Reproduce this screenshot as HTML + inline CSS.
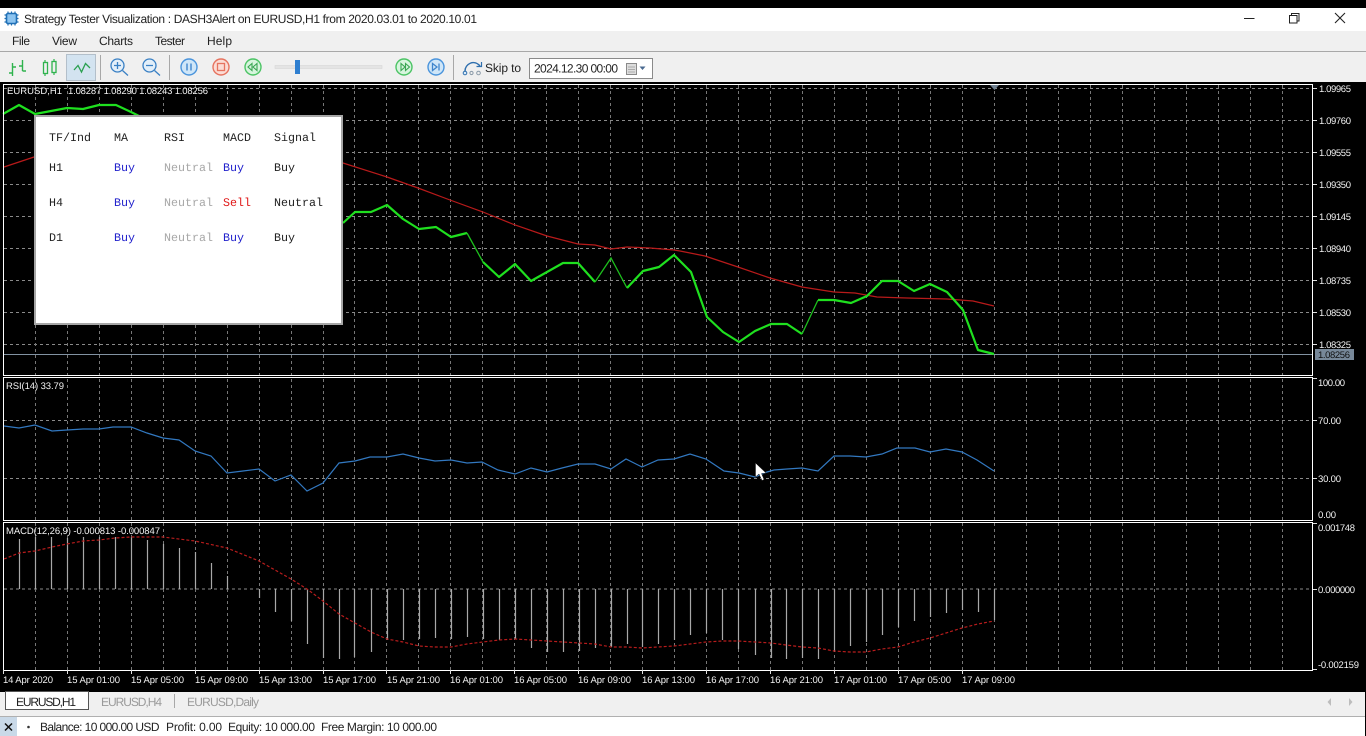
<!DOCTYPE html>
<html><head><meta charset="utf-8"><title>Strategy Tester Visualization</title>
<style>
html,body{margin:0;padding:0;background:#000;width:1366px;height:736px;overflow:hidden}
svg{display:block;filter:blur(.35px)}
text{font-family:"Liberation Sans",sans-serif;text-rendering:geometricPrecision}
.c text{font-size:9.5px;fill:#f2f2f2}
.u text{font-size:12px;fill:#222}
.m text{font-family:"Liberation Mono",monospace;font-size:11.67px;fill:#222;stroke:currentColor;stroke-width:0}
</style></head><body>
<svg xmlns="http://www.w3.org/2000/svg" width="1366" height="736" viewBox="0 0 1366 736">
<rect width="1366" height="736" fill="#000"/>
<!-- window chrome -->
<rect x="0" y="8" width="1366" height="23" fill="#fff"/>
<rect x="0" y="31" width="1366" height="51" fill="#f0f0f0"/>
<rect x="0" y="51" width="1366" height="1" fill="#a8a8a8"/>
<!-- title icon -->
<rect x="6.5" y="13.5" width="10" height="10" rx="1.5" fill="#8cc4f0" stroke="#1f6fb5" stroke-width="1.6"/>
<path d="M8 11.5V13M11.5 11.5V13M15 11.5V13M8 24V25.5M11.5 24V25.5M15 24V25.5M4.5 15H6M4.5 18.5H6M4.5 22H6M17 15H18.5M17 18.5H18.5M17 22H18.5" stroke="#1f6fb5" stroke-width="1.2"/>
<g class="u">
<text x="24" y="23" textLength="453">Strategy Tester Visualization : DASH3Alert on EURUSD,H1 from 2020.03.01 to 2020.10.01</text>
<text x="12" y="45" textLength="18">File</text>
<text x="52" y="45" textLength="25">View</text>
<text x="99" y="45" textLength="34">Charts</text>
<text x="155" y="45" textLength="30">Tester</text>
<text x="207" y="45" textLength="25">Help</text>
</g>
<!-- window controls -->
<path d="M1244 18.5H1254.5" stroke="#222" stroke-width="1"/>
<path d="M1289.5 15.5h7.5v7.5h-7.5zM1291.5 15.5v-2h7.5v7.5h-2" fill="none" stroke="#222" stroke-width="1"/>
<path d="M1335 13l10 10M1345 13l-10 10" stroke="#222" stroke-width="1.1"/>
<!-- toolbar -->
<path d="M12.5 63V76M9 73H12.5M22.5 60V71M22.5 66H19M12.5 67H16M22.500 71H26" stroke="#2fb34d" stroke-width="1.4" fill="none"/>
<path d="M45 60V76M54 59V75" stroke="#2fb34d" stroke-width="1.2"/>
<rect x="43.5" y="62.5" width="4" height="11" fill="#f0f0f0" stroke="#2fb34d" stroke-width="1.3"/>
<rect x="52" y="61.5" width="4" height="11" fill="#f0f0f0" stroke="#2fb34d" stroke-width="1.3"/>
<rect x="66.5" y="54.5" width="29" height="26" fill="#d3e3f0" stroke="#b3bfca"/>
<path d="M74 70L78 65.5L81.5 72L85.5 63.5L90 68" fill="none" stroke="#2aa050" stroke-width="1.3"/>
<rect x="100" y="55" width="1" height="25" fill="#a8a8a8"/>
<circle cx="117.5" cy="65.5" r="6.5" fill="#e3eff9" stroke="#3a80c4" stroke-width="1.3"/>
<path d="M122.5 70.5L128 75.5M114 65.5H121M117.5 62V69" stroke="#3a80c4" stroke-width="1.3"/>
<circle cx="149.5" cy="65.5" r="6.5" fill="#e3eff9" stroke="#3a80c4" stroke-width="1.3"/>
<path d="M154.5 70.5L160 75.5M146 65.5H153" stroke="#3a80c4" stroke-width="1.3"/>
<rect x="169" y="55" width="1" height="25" fill="#a8a8a8"/>
<circle cx="189" cy="67" r="8" fill="#cfe6f8" stroke="#4a94dc" stroke-width="1.4"/>
<path d="M187 63.5V70.5M191 63.5V70.5" stroke="#3f85cc" stroke-width="1.4"/>
<circle cx="221" cy="67" r="8" fill="#fbdcd5" stroke="#e6735f" stroke-width="1.4"/>
<rect x="217.5" y="63.5" width="7" height="7" fill="none" stroke="#e6735f" stroke-width="1.3"/>
<circle cx="253" cy="67" r="8" fill="#d7f5de" stroke="#4cc465" stroke-width="1.4"/>
<path d="M252 63.5L248 67L252 70.5ZM257 63.5L253 67L257 70.5Z" fill="none" stroke="#3aa553" stroke-width="1.1"/>
<rect x="275" y="65.5" width="107" height="3" fill="#e4e4e4" stroke="#d6d6d6" stroke-width=".6"/>
<rect x="295" y="60" width="5" height="14" fill="#2f7fd0"/>
<circle cx="404" cy="67" r="8" fill="#d7f5de" stroke="#4cc465" stroke-width="1.4"/>
<path d="M401 63.5L405 67L401 70.5ZM405.5 63.5L409.5 67L405.5 70.5Z" fill="none" stroke="#3aa553" stroke-width="1.1"/>
<circle cx="436" cy="67" r="8" fill="#cfe6f8" stroke="#4a94dc" stroke-width="1.4"/>
<path d="M432.5 63.5L437 67L432.5 70.5ZM439 63.5V70.5" fill="none" stroke="#3f85cc" stroke-width="1.3"/>
<rect x="453" y="55" width="1" height="25" fill="#a8a8a8"/>
<path d="M465 71C465 64 474 59 480 66" fill="none" stroke="#2f6fae" stroke-width="1.4"/>
<path d="M476.5 66.5H481.5V62" fill="none" stroke="#2f6fae" stroke-width="1.2"/>
<circle cx="465" cy="73" r="1.8" fill="#dcebf7" stroke="#2f6fae"/>
<circle cx="471.5" cy="73" r="1.6" fill="#f0f0f0" stroke="#8a9aa8"/>
<circle cx="478.5" cy="73" r="1.8" fill="#f0f0f0" stroke="#8a9aa8"/>
<g class="u"><text x="485" y="72" textLength="36">Skip to</text></g>
<rect x="529.5" y="58.5" width="123" height="20" fill="#fff" stroke="#8a8a8a"/>
<g class="u"><text x="534" y="72.5" textLength="84">2024.12.30 00:00</text></g>
<rect x="626.5" y="63.5" width="10" height="11" fill="#ddd" stroke="#8a8a8a"/>
<path d="M628 67h7M628 69.500h7M628 72h7" stroke="#9a9a9a" stroke-width=".8"/>
<path d="M639.5 66.5h6l-3 3.5z" fill="#4a6a90"/>

<!-- chart grid: main pane -->
<g fill="none" stroke="#8a8a8a" stroke-width="1" stroke-dasharray="3 3">
<path d="M4 88.5H1313M4 120.5H1313M4 152.5H1313M4 184.5H1313M4 216.5H1313M4 248.5H1313M4 280.5H1313M4 312.5H1313M4 344.5H1313M4 420.5H1313M4 478.5H1313M4 589H1313"/>
<path stroke="#777" d="M35.5 85V670M67.5 85V670M99.5 85V670M131.5 85V670M163.5 85V670M195.5 85V670M227.5 85V670M259.5 85V670M291.5 85V670M323.5 85V670M354.5 85V670M386.5 85V670M418.5 85V670M450.5 85V670M482.5 85V670M514.5 85V670M546.5 85V670M578.5 85V670M610.5 85V670M642.5 85V670M674.5 85V670M706.5 85V670M738.5 85V670M770.5 85V670M802.5 85V670M834.5 85V670M866.5 85V670M898.5 85V670M930.5 85V670M962.5 85V670M994.5 85V670M1026.5 85V670M1058.5 85V670M1090.5 85V670M1122.5 85V670M1154.5 85V670M1186.5 85V670M1218.5 85V670M1250.5 85V670M1282.5 85V670"/>
</g>
<!-- pane gaps -->
<rect x="0" y="375" width="1313" height="3" fill="#000"/>
<rect x="0" y="520" width="1313" height="3" fill="#000"/>
<!-- price line -->
<path d="M4 354.5H1313" stroke="#8292a2" stroke-width="1"/>
<!-- MA -->
<polyline fill="none" stroke="#b81a1a" stroke-width="1.2" points="4,167 34,157 60,150 343,163 387,177 418,188 450,200 483,212 515,225 547,236 578,244 595,245 611,249 627,247 650,248 674,250 680,251 705,256 738,267 770,278 802,287 834,292 855,293 877,297 907,298 947,299 973,301 994,306"/>
<!-- price main line -->
<g fill="none" stroke="#1fe01f" stroke-width="2.2" stroke-linejoin="round">
<polyline points="3,114 19,105 35,114 51,111 67,108 83,109 99,105 116,105 131,112 139,116"/>
<polyline points="343,223 355,212 371,212 387,205 403,219 419,229 436,227 451,237 467,233"/>
<polyline points="483,262 499,277 515,264 531,281 547,272 563,263 578,263 595,282"/>
<polyline points="627,288 643,271 659,267 674,255 691,272 707,317 723,332 739,342 755,331 771,324 787,324 802,334"/>
<polyline points="818,300 834,300 851,303 867,296 882,281 898,281 914,291 930,284 947,292 963,310 978,350 994,354"/>
</g>
<g fill="none" stroke="#1dc01d" stroke-width="1.3">
<polyline points="467,233 483,262"/>
<polyline points="595,282 611,258 627,288"/>
<polyline points="802,334 818,300"/>
</g>
<!-- RSI -->
<polyline fill="none" stroke="#3278c0" stroke-width="1.2" points="4,426 19,428 35,425 52,431 67,430 83,429 99,429 113,427 131,427 147,433 163,438 179,440 195,451 211,456 227,473 243,471 259,469 275,481 291,475 307,491 323,483 339,463 355,461 370,457 387,457 403,454 419,458 435,461 451,460 467,463 482,462 498,470 515,474 531,468 547,472 562,468 578,464 595,464 611,469 626,459 642,467 658,460 674,459 690,454 706,459 724,471 739,473 755,477 767,472 774,470 787,469 802,468 818,471 834,456 850,456 866,457 882,454 897,448 915,448 930,452 946,449 962,452 977,460 994,471"/>
<!-- MACD histogram -->
<path stroke="#a8a8a8" stroke-width="1.2" fill="none" d="M19.5 539V589M35.5 537V589M51.5 537V589M67.5 538V589M83.5 537V589M99.5 537V589M115.5 537V589M131.5 537V589M147.5 540V589M163.5 544V589M179.5 548V589M195.5 552V589M211.5 563V589M227.5 576V589M259.5 589V598M275.5 589V612M291.5 589V621M307.5 589V644M323.5 589V658M339.5 589V659M354.5 589V657M371.5 589V652M387.5 589V640M403.5 589V640M419.5 589V639M435.5 589V638M451.5 589V639M467.5 589V637M483.5 589V639M499.5 589V640M515.5 589V639M531.5 589V648M547.5 589V652M563.5 589V652M579.5 589V651M595.5 589V648M611.5 589V647M627.5 589V644M642.5 589V647M658.5 589V644M674.5 589V640M690.5 589V635M706.5 589V633M722.5 589V640M738.5 589V649M755.5 589V655M771.5 589V658M786.5 589V659M802.5 589V658M818.5 589V659M834.5 589V652M850.5 589V646M866.5 589V642M882.5 589V635M898.5 589V627M914.5 589V621M930.5 589V617M946.5 589V613M962.5 589V610M978.5 589V612M994.5 589V620"/>
<!-- MACD signal -->
<polyline fill="none" stroke="#b81c1c" stroke-width="1.2" stroke-dasharray="3 2" points="4,559 19,553 35,551 52,547 67,544 83,541 99,540 115,538 131,537 163,537 195,541 227,548 259,561 291,579 307,589 323,601 339,614 355,623 371,632 387,639 403,642 419,646 435,647 451,647 467,644 483,642 499,640 515,639 531,640 547,641 563,642 579,643 595,644 611,647 627,647 642,648 658,647 674,646 690,644 706,642 722,641 738,641 755,642 771,643 786,645 802,647 818,648 834,651 850,652 866,652 882,649 898,647 914,642 930,638 946,633 962,628 978,624 994,621"/>
<!-- frames -->
<g fill="none" stroke="#fff" stroke-width="1">
<rect x="3.5" y="84.5" width="1309" height="291"/>
<rect x="3.5" y="377.5" width="1309" height="143"/>
<rect x="3.5" y="522.5" width="1309" height="148"/>
</g>
<!-- right axis ticks -->
<path stroke="#e0e0e0" fill="none" d="M1313 88.5h4M1313 120.5h4M1313 152.5h4M1313 184.5h4M1313 216.5h4M1313 248.5h4M1313 280.5h4M1313 312.5h4M1313 344.5h4M1313 378.5h4M1313 420.5h4M1313 478.5h4M1313 523.5h4M1313 589.5h4M1313 669.5h4"/>
<!-- bottom ticks -->
<path stroke="#e0e0e0" fill="none" d="M3.5 670v4M67.5 670v4M131.5 670v4M195.5 670v4M259.5 670v4M323.5 670v4M386.5 670v4M450.5 670v4M514.5 670v4M578.5 670v4M642.5 670v4M706.5 670v4M770.5 670v4M834.5 670v4M898.5 670v4M962.5 670v4"/>
<path d="M990 85h9l-4.500 5z" fill="#6f8090"/>
<!-- chart labels -->
<g class="c">
<text x="7" y="94" textLength="55">EURUSD,H1</text>
<text x="68" y="94" textLength="140">1.08287 1.08290 1.08243 1.08256</text>
<text x="6" y="389" textLength="58">RSI(14) 33.79</text>
<text x="6" y="534" textLength="154">MACD(12,26,9) -0.000813 -0.000847</text>
<text x="1319" y="92" textLength="32">1.09965</text>
<text x="1319" y="124" textLength="32">1.09760</text>
<text x="1319" y="156" textLength="32">1.09555</text>
<text x="1319" y="188" textLength="32">1.09350</text>
<text x="1319" y="220" textLength="32">1.09145</text>
<text x="1319" y="252" textLength="32">1.08940</text>
<text x="1319" y="284" textLength="32">1.08735</text>
<text x="1319" y="316" textLength="32">1.08530</text>
<text x="1319" y="348" textLength="32">1.08325</text>
<text x="1318" y="386" textLength="27">100.00</text>
<text x="1318" y="424" textLength="23">70.00</text>
<text x="1318" y="482" textLength="23">30.00</text>
<text x="1318" y="518" textLength="18">0.00</text>
<text x="1318" y="531" textLength="37">0.001748</text>
<text x="1318" y="593" textLength="37">0.000000</text>
<text x="1318" y="668" textLength="41">-0.002159</text>
<text x="3" y="683" textLength="50">14 Apr 2020</text>
<text x="67" y="683" textLength="53">15 Apr 01:00</text>
<text x="131" y="683" textLength="53">15 Apr 05:00</text>
<text x="195" y="683" textLength="53">15 Apr 09:00</text>
<text x="259" y="683" textLength="53">15 Apr 13:00</text>
<text x="323" y="683" textLength="53">15 Apr 17:00</text>
<text x="387" y="683" textLength="53">15 Apr 21:00</text>
<text x="450" y="683" textLength="53">16 Apr 01:00</text>
<text x="514" y="683" textLength="53">16 Apr 05:00</text>
<text x="578" y="683" textLength="53">16 Apr 09:00</text>
<text x="642" y="683" textLength="53">16 Apr 13:00</text>
<text x="706" y="683" textLength="53">16 Apr 17:00</text>
<text x="770" y="683" textLength="53">16 Apr 21:00</text>
<text x="834" y="683" textLength="53">17 Apr 01:00</text>
<text x="898" y="683" textLength="53">17 Apr 05:00</text>
<text x="962" y="683" textLength="53">17 Apr 09:00</text>
</g>
<rect x="1315" y="349" width="39" height="11" fill="#778899"/>
<text x="1318" y="358" font-size="9.5" fill="#111" textLength="32">1.08256</text>
<!-- dashboard panel -->
<rect x="35" y="116" width="307" height="208" fill="#fff" stroke="#a6a6a6" stroke-width="2"/>
<g class="m">
<text x="49" y="141">TF/Ind</text><text x="114" y="141">MA</text><text x="164" y="141">RSI</text><text x="223" y="141">MACD</text><text x="274" y="141">Signal</text>
<text x="49" y="171">H1</text><text x="114" y="171" style="fill:#2222cc">Buy</text><text x="164" y="171" style="fill:#a8a8a8">Neutral</text><text x="223" y="171" style="fill:#2222cc">Buy</text><text x="274" y="171">Buy</text>
<text x="49" y="206">H4</text><text x="114" y="206" style="fill:#2222cc">Buy</text><text x="164" y="206" style="fill:#a8a8a8">Neutral</text><text x="223" y="206" style="fill:#e01818">Sell</text><text x="274" y="206">Neutral</text>
<text x="49" y="241">D1</text><text x="114" y="241" style="fill:#2222cc">Buy</text><text x="164" y="241" style="fill:#a8a8a8">Neutral</text><text x="223" y="241" style="fill:#2222cc">Buy</text><text x="274" y="241">Buy</text>
</g>
<!-- cursor -->
<path d="M755.5 463V477L759 474L762 480.500L764 479.500L761.500 473.500L766 473Z" fill="#fff" stroke="#222" stroke-width=".5"/>
<!-- tabs -->
<rect x="0" y="692" width="1365" height="24" fill="#f0f0f0"/>
<rect x="0" y="716" width="1365" height="1" fill="#b0b0b0"/>
<rect x="5.500" y="691.500" width="83" height="18" fill="#fff" stroke="#555"/>
<g class="u">
<text x="16" y="706" textLength="60">EURUSD,H1</text>
<text x="101" y="706" textLength="61" style="fill:#9a9a9a">EURUSD,H4</text>
<text x="187" y="706" textLength="72" style="fill:#9a9a9a">EURUSD,Daily</text>
</g>
<rect x="174" y="694" width="1" height="14" fill="#a8a8a8"/>
<path d="M1331 698v8l-3.500-4zM1349 698v8l3.500-4z" fill="#bdbdbd"/>
<!-- status -->
<rect x="0" y="717" width="1365" height="19" fill="#fff"/>
<rect x="0" y="717" width="17" height="19" fill="#c9d9e8"/>
<path d="M5 723.500l7 7M12 723.500l-7 7" stroke="#111" stroke-width="1.5"/>
<circle cx="28.500" cy="727" r="1.300" fill="#333"/>
<g class="u">
<text x="40" y="731" textLength="119.500">Balance: 10 000.00 USD</text>
<text x="166" y="731" textLength="56">Profit: 0.00</text>
<text x="228" y="731" textLength="87">Equity: 10 000.00</text>
<text x="321" y="731" textLength="116">Free Margin: 10 000.00</text>
</g>
</svg>
</body></html>
